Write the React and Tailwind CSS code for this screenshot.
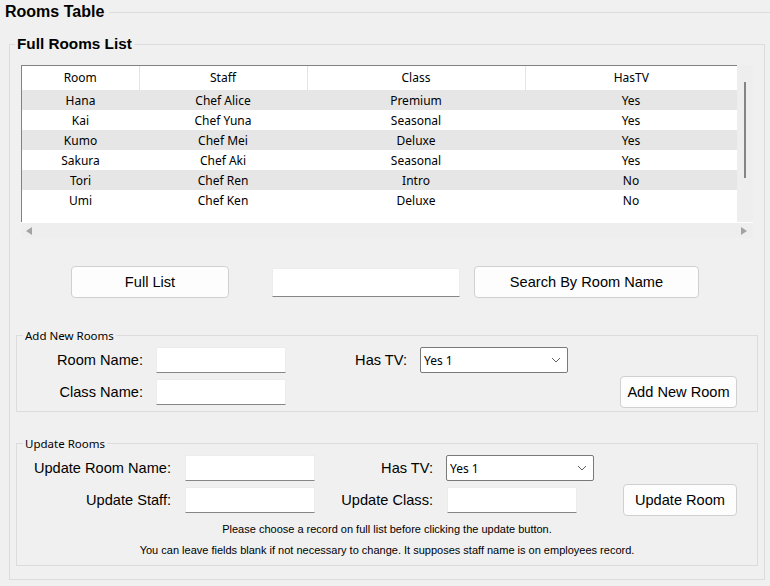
import React from 'react';

const rooms = [
    { room: 'Hana', staff: 'Chef Alice', cls: 'Premium', tv: 'Yes' },
    { room: 'Kai', staff: 'Chef Yuna', cls: 'Seasonal', tv: 'Yes' },
    { room: 'Kumo', staff: 'Chef Mei', cls: 'Deluxe', tv: 'Yes' },
    { room: 'Sakura', staff: 'Chef Aki', cls: 'Seasonal', tv: 'Yes' },
    { room: 'Tori', staff: 'Chef Ren', cls: 'Intro', tv: 'No' },
    { room: 'Umi', staff: 'Chef Ken', cls: 'Deluxe', tv: 'No' },
];

const ui = { fontFamily: '"Noto Sans", "Liberation Sans", sans-serif' };

const Field = ({ w = 'w-[130px]' }) => (
    <input
        type="text"
        className={`${w} h-[26px] bg-white border border-[#ececec] border-b-[#868686] outline-none`}
    />
);

const Combo = () => (
    <div
        className="w-[148px] h-[26px] bg-white border border-[#7a7a7a] rounded-[2px] flex items-center pl-[3px] pr-[6px] pt-[2px] text-[12px] text-black"
        style={ui}
    >
        <span className="flex-1">Yes 1</span>
        <svg width="10" height="6" viewBox="0 0 10 6" fill="none" className="-mt-[2px]">
            <path d="M1 1 L5 5 L9 1" stroke="#606060" strokeWidth="1" />
        </svg>
    </div>
);

const Btn = ({ className, children }) => (
    <button className={`${className} pt-[2px] bg-[#fdfdfd] border border-[#d0d0d0] rounded-[4px] text-[14.6px] text-black`}>
        {children}
    </button>
);

const Label = ({ w, children }) => (
    <span className={`${w} pt-[2px] text-right`}>{children}</span>
);

const GroupTitle = ({ children }) => (
    <div className="-mt-[7px] ml-[6px] w-fit px-[2px] h-[13px] leading-[13px] bg-[#f0f0f0] text-[11.5px] text-black" style={ui}>
        {children}
    </div>
);

const RoomsGrid = () => (
    <div className="ml-[11px] mt-[12px] w-[732px]">
        <div className="flex">
            <div className="w-[716px] h-[157px] bg-white border-l border-t border-[#828282]">
                <table className="table-fixed w-[715px] border-collapse text-[12px] text-black" style={ui}>
                    <colgroup>
                        <col className="w-[117px]" />
                        <col className="w-[168px]" />
                        <col className="w-[218px]" />
                        <col className="w-[212px]" />
                    </colgroup>
                    <thead>
                        <tr className="h-[24px]">
                            <th className="font-normal border-r border-[#e5e5e5]">Room</th>
                            <th className="font-normal border-r border-[#e5e5e5]">Staff</th>
                            <th className="font-normal border-r border-[#e5e5e5]">Class</th>
                            <th className="font-normal">HasTV</th>
                        </tr>
                    </thead>
                    <tbody>
                        {rooms.map((r, i) => (
                            <tr key={r.room} className={`h-[20px] ${i % 2 === 0 ? 'bg-[#e6e6e6]' : 'bg-white'}`}>
                                <td className="text-center p-0 pt-px">{r.room}</td>
                                <td className="text-center p-0 pt-px">{r.staff}</td>
                                <td className="text-center p-0 pt-px">{r.cls}</td>
                                <td className="text-center p-0 pt-px">{r.tv}</td>
                            </tr>
                        ))}
                    </tbody>
                </table>
            </div>
            {/* vertical scrollbar */}
            <div className="w-[16px] h-[157px] bg-[#eeeeee] flex justify-center">
                <div className="mt-[17px] w-[2px] h-[96px] bg-[#858585]" />
            </div>
        </div>
        {/* horizontal scrollbar */}
        <div className="h-[16px] bg-[#eeeeee] border-t border-white flex items-center justify-between pl-[5px] pr-[6px]">
            <svg width="6" height="8" viewBox="0 0 6 8"><path d="M6 0 L0 4 L6 8 Z" fill="#a3a3a3" /></svg>
            <svg width="6" height="8" viewBox="0 0 6 8"><path d="M0 0 L6 4 L0 8 Z" fill="#a3a3a3" /></svg>
        </div>
    </div>
);

export default function App() {
    return (
        <div
            className="w-[770px] h-[586px] bg-[#f0f0f0] overflow-hidden text-black"
            style={{ fontFamily: '"Liberation Sans", Arial, sans-serif' }}
        >
            {/* outer group title */}
            <div className="flex items-center pt-[4px] h-[20px]">
                <span className="pl-[5px] text-[16px] font-bold leading-[16px]">Rooms Table</span>
                <div className="flex-1 ml-[5px] h-px bg-[#dcdcdc]" />
            </div>

            {/* Full Rooms List group */}
            <div className="ml-[9px] mt-[24px] w-[756px] h-[536px] border border-[#dcdcdc]">
                <div className="-mt-[10px] ml-[5px] w-fit px-[2px] h-[17px] leading-[17px] bg-[#f0f0f0] text-[15.3px] font-bold">
                    Full Rooms List
                </div>
                <div className="h-px" />

                <RoomsGrid />

                <div className="mt-[28px] flex items-center">
                    <Btn className="ml-[61px] w-[158px] h-[32px]">Full List</Btn>
                    <input
                        type="text"
                        className="ml-[43px] w-[188px] h-[29px] bg-white border border-[#ececec] border-b-[#868686] outline-none"
                    />
                    <Btn className="ml-[14px] w-[225px] h-[32px]">Search By Room Name</Btn>
                </div>

                {/* Add New Rooms */}
                <div className="ml-[6px] mt-[37px] w-[742px] border border-[#dcdcdc] pb-[6px] text-[14.6px]">
                    <GroupTitle>Add New Rooms</GroupTitle>
                    <div className="mt-[5px] h-[26px] flex items-center">
                        <Label w="w-[126px]">Room Name:</Label>
                        <div className="ml-[13px]"><Field /></div>
                        <Label w="w-[121px]">Has TV:</Label>
                        <div className="ml-[13px]"><Combo /></div>
                    </div>
                    <div className="mt-[6px] h-[26px] flex items-center">
                        <Label w="w-[126px]">Class Name:</Label>
                        <div className="ml-[13px]"><Field /></div>
                        <Btn className="ml-auto mr-[20px] w-[117px] h-[32px] shrink-0">Add New Room</Btn>
                    </div>
                </div>

                {/* Update Rooms */}
                <div className="ml-[6px] mt-[31px] w-[742px] border border-[#dcdcdc] pb-[8px] text-[14.6px]">
                    <GroupTitle>Update Rooms</GroupTitle>
                    <div className="mt-[5px] h-[26px] flex items-center">
                        <Label w="w-[154px]">Update Room Name:</Label>
                        <div className="ml-[14px]"><Field /></div>
                        <Label w="w-[118px]">Has TV:</Label>
                        <div className="ml-[13px]"><Combo /></div>
                    </div>
                    <div className="mt-[6px] h-[26px] flex items-center">
                        <Label w="w-[154px]">Update Staff:</Label>
                        <div className="ml-[14px]"><Field /></div>
                        <Label w="w-[118px]">Update Class:</Label>
                        <div className="ml-[14px]"><Field /></div>
                        <Btn className="ml-auto mr-[20px] w-[114px] h-[32px] shrink-0">Update Room</Btn>
                    </div>
                    <p className="mt-[10px] text-center text-[11px] leading-[13px]">
                        Please choose a record on full list before clicking the update button.
                    </p>
                    <p className="mt-[8px] text-center text-[11px] leading-[13px]">
                        You can leave fields blank if not necessary to change. It supposes staff name is on employees record.
                    </p>
                </div>
            </div>
        </div>
    );
}
